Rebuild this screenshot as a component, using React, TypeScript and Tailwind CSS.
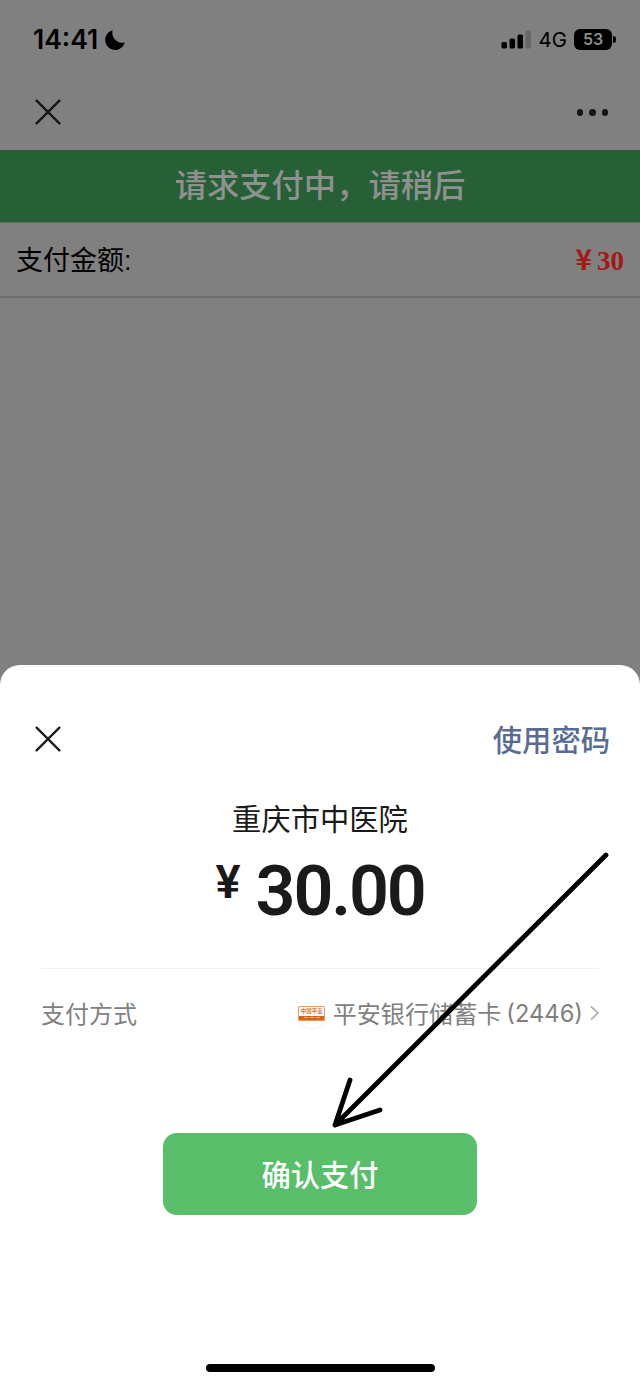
function CloseIcon() {
  return (
    <svg className="size-[26px]" viewBox="0 0 26 26" fill="none" stroke="currentColor" strokeWidth="2.3" strokeLinecap="round">
      <path d="M1.6 1.6 24.4 24.4M24.4 1.6 1.6 24.4" />
    </svg>
  )
}

function StatusBar() {
  return (
    <div className="flex h-20 items-center justify-between pl-[33px] pr-6 text-black">
      <div className="flex items-center gap-[7px]">
        <span className="pb-px font-['Inter'] text-[26.5px] leading-none font-semibold">14:41</span>
        <svg className="size-5" viewBox="0 0 20 20" fill="currentColor">
          <path d="M7.6.3C5.8 6.9 12 14.3 19.8 12.6A10 10 0 1 1 7.6.3Z" />
        </svg>
      </div>
      <div className="flex items-center">
        <svg className="mb-[2px] h-[19px] w-[30px]" viewBox="0 0 30 19" fill="currentColor">
          <rect x="0.5" y="12" width="5.5" height="6.5" rx="1.5" />
          <rect x="8.5" y="8.5" width="5.5" height="10" rx="1.5" />
          <rect x="16.5" y="4.5" width="5.5" height="14" rx="1.5" />
          <rect x="24.5" y="0.5" width="5.5" height="18" rx="1.5" fill="#666" />
        </svg>
        <span className="ml-[7px] font-['Inter'] text-[20.5px] leading-none">4G</span>
        <div className="ml-[7px] mb-[2px] flex h-[21px] w-[38px] items-center justify-center rounded-md bg-black font-['Inter'] text-[16px] leading-none font-semibold text-[#8c8c8c]">
          53
        </div>
        <div className="mb-[2px] ml-px h-[7px] w-[3px] rounded-r-full bg-black" />
      </div>
    </div>
  )
}

function RequestPage() {
  return (
    <div className="h-[665px] bg-[#808080]">
      <StatusBar />
      <div className="flex h-[70px] items-start justify-between pt-[19px] pr-[32px] pl-[35px] text-[#151515]">
        <button>
          <CloseIcon />
        </button>
        <button className="flex gap-[6px] pt-[10px]">
          <span className="size-[6.5px] rounded-full bg-[#151515]" />
          <span className="size-[6.5px] rounded-full bg-[#151515]" />
          <span className="size-[6.5px] rounded-full bg-[#151515]" />
        </button>
      </div>
      <div className="flex h-[73px] items-center justify-center border-b border-[#5e6e62] bg-[#275f36] pb-[5px] text-[32.3px] font-medium text-[#8d928e]">
        请求支付中，请稍后
      </div>
      <div className="flex h-[75px] items-center justify-between border-b-2 border-[#6d6d6d] px-4 text-[27px] text-black">
        <span className="pt-[2px]">
          支付金额<span className="font-['Liberation_Sans']">:</span>
        </span>
        <span className="flex items-center font-bold text-[#a41a14]">
          <span className="pb-[3px] text-[28px]">¥</span>
          <span className="ml-[5px] pt-[3px] font-['Liberation_Serif'] text-[27px]">30</span>
        </span>
      </div>
    </div>
  )
}

function BankLogo() {
  return (
    <span className="mt-[2px] mr-[6px] flex size-[30px] items-center justify-center rounded-full border-b border-[#eaeaea]">
      <span className="flex h-[15px] w-[27px] shrink-0 flex-col overflow-hidden rounded-[1px] border border-[#ee9d60] bg-white">
        <span className="flex h-[9px] items-center justify-center text-[5.5px] leading-none font-bold text-[#d97736]">中国平安</span>
        <span className="flex h-[4px] items-center justify-center gap-[2px] bg-[#d4651f]">
          <span className="h-px w-1 bg-[#efae83]" />
          <span className="h-px w-1 bg-[#efae83]" />
          <span className="h-px w-1 bg-[#efae83]" />
        </span>
      </span>
    </span>
  )
}

function PaymentSheet() {
  return (
    <div className="flex h-[721px] flex-col items-center rounded-t-[20px] bg-white text-[#1a1a1a]">
      <div className="flex h-[147px] w-full items-center justify-between pr-[30px] pl-[35px]">
        <button>
          <CloseIcon />
        </button>
        <button className="text-[29.3px] leading-none font-medium text-[#576b95]">使用密码</button>
      </div>
      <div className="h-11 text-[29.3px] leading-[10px]">重庆市中医院</div>
      <div className="flex h-[112px] w-full items-start justify-center font-['Roboto'] leading-none font-semibold">
        <span className="mt-[2px] text-[47px]">¥</span>
        <span className="ml-[15px] text-[70px] tracking-[-2.2px]">30.00</span>
      </div>
      <div className="flex h-[92px] w-[558px] items-center justify-between border-t border-[#efefef] pb-[3px] text-[24px] text-[#7f7f7f]">
        <span>支付方式</span>
        <span className="flex items-center">
          <BankLogo />
          <span className="text-[24.1px]">平安银行储蓄卡</span>
          <span className="ml-[5px] pt-px font-['Inter'] text-[23.7px]">(2446)</span>
          <svg className="-mr-px ml-[7px] h-4 w-[10px]" viewBox="0 0 10 16" fill="none" stroke="#b2b2b2" strokeWidth="1.8">
            <path d="m1 1.5 7 6.5-7 6.5" />
          </svg>
        </span>
      </div>
      <button className="mt-[73px] flex h-[82px] w-[314px] items-center justify-center rounded-[14px] bg-[#58be6a] pb-px text-[29.3px] font-medium text-white">
        确认支付
      </button>
      <div className="mt-auto mb-[14px] h-2 w-[229px] rounded-full bg-black" />
    </div>
  )
}

export default function App() {
  return (
    <div className="relative h-[1386px] w-[640px] overflow-hidden bg-[#808080] font-['Noto_Sans_CJK_SC',sans-serif]">
      <RequestPage />
      <PaymentSheet />
      {/* Pointer to the confirm button */}
      <svg className="pointer-events-none absolute top-[840px] left-[320px] h-[300px] w-[300px]" viewBox="320 840 300 300" fill="none" stroke="#000" strokeWidth="4.8" strokeLinecap="round" strokeLinejoin="round">
        <path d="M606 855 335 1125M350 1080 335 1125 380 1110" />
      </svg>
    </div>
  )
}
